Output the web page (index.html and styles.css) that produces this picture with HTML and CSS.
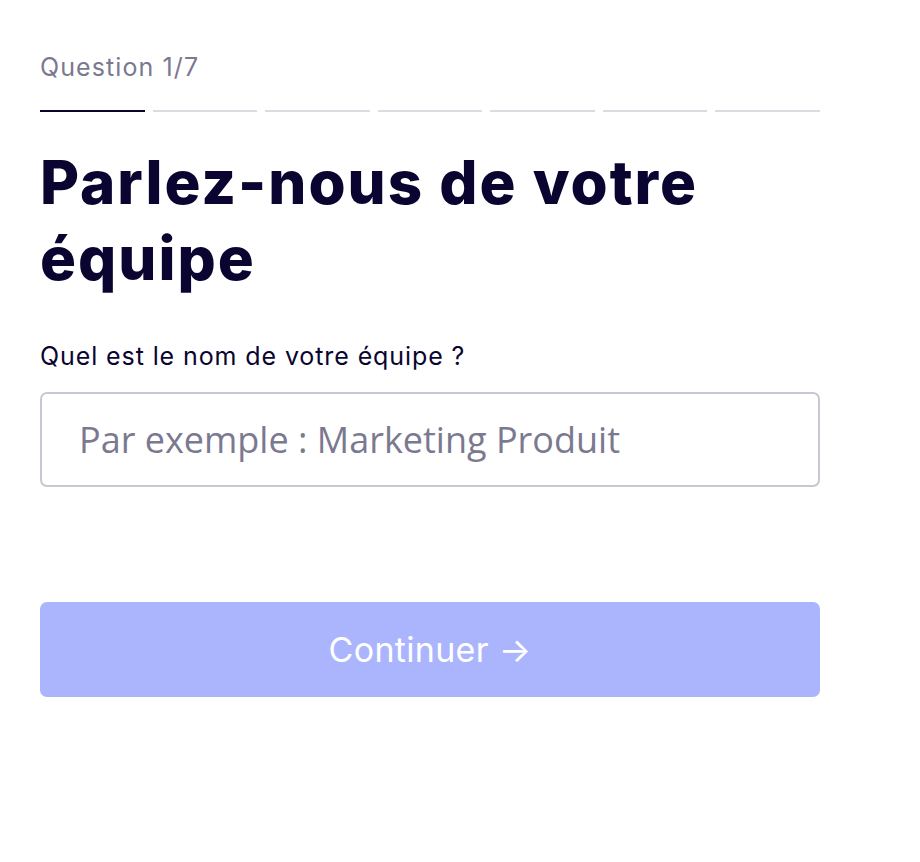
FILE: index.html
```html
<!DOCTYPE html>
<html lang="fr">
<head>
<meta charset="utf-8">
<title>Parlez-nous de votre équipe</title>
<link rel="stylesheet" href="styles.css">
</head>
<body>
<main class="step">
  <p class="step-count">Question 1/7</p>
  <div class="progress">
    <span class="seg seg-done"></span>
    <span class="seg"></span>
    <span class="seg"></span>
    <span class="seg"></span>
    <span class="seg"></span>
    <span class="seg"></span>
    <span class="seg"></span>
  </div>
  <h1 class="title">Parlez-nous de votre équipe</h1>
  <label class="field-label" for="team">Quel est le nom de votre équipe ?</label>
  <input class="field" id="team" type="text" placeholder="Par exemple : Marketing Produit">
  <button class="cta" type="button">Continuer →</button>
</main>
</body>
</html>
```

FILE: styles.css
```css
* { box-sizing: border-box; }
html, body { margin: 0; background: #fff; }
body { font-family: Inter, "Noto Sans", sans-serif; color: #0a0530; }

.step {
  width: 780px;
  margin-left: 40px;
  padding-top: 50px;
  display: flex;
  flex-direction: column;
}

.step-count {
  margin: 0;
  font-size: 25px;
  line-height: 34px;
  color: #7b7990;
  font-weight: 400;
  letter-spacing: 1.1px;
}

.progress {
  margin-top: 26px;
  display: flex;
  gap: 8px;
  height: 2px;
}
.seg { flex: 1; background: #dcdbe2; }
.seg-done { background: #0a0530; }

.title {
  margin: 32px 0 0;
  font-size: 60px;
  line-height: 76px;
  font-weight: 800;
  letter-spacing: 2px;
  color: #0a0530;
  max-width: 720px;
}

.field-label {
  margin-top: 45px;
  font-size: 25px;
  line-height: 30px;
  letter-spacing: 0.9px;
  color: #0a0530;
}

.field {
  margin-top: 21px;
  height: 95px;
  width: 100%;
  border: 2px solid #c8c7d2;
  border-radius: 7px;
  padding: 0 37px;
  font-family: "Open Sans", "Noto Sans", sans-serif;
  font-size: 36px;
  color: #0a0530;
  outline: none;
}
.field::placeholder { color: #7b7990; }

.cta {
  margin-top: 115px;
  height: 95px;
  width: 100%;
  border: 0;
  border-radius: 7px;
  background: #abb5fd;
  color: #fff;
  font-family: Inter, "Noto Sans", sans-serif;
  font-size: 34px;
  font-weight: 400;
  letter-spacing: 0.3px;
  cursor: pointer;
}
```
